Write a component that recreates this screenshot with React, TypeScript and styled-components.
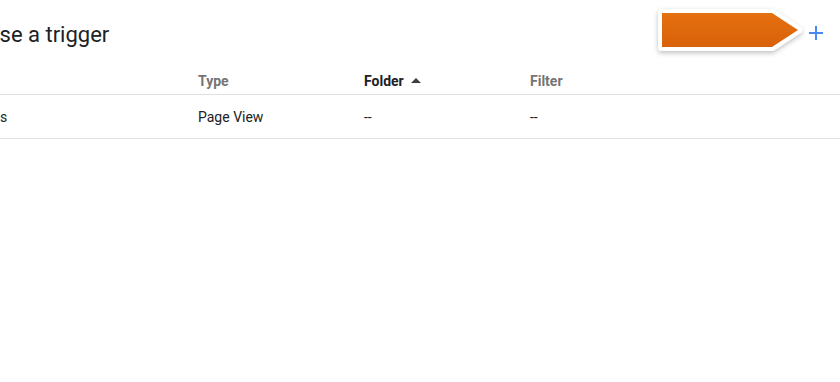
import styled, { createGlobalStyle } from "styled-components";

const GlobalStyle = createGlobalStyle`
  html, body {
    margin: 0;
    padding: 0;
    background: #ffffff;
    font-family: Roboto, "Liberation Sans", Arial, sans-serif;
    overflow: hidden;
  }
`;

const Page = styled.div`
  position: relative;
  width: 840px;
  height: 382px;
  overflow: hidden;
  background: #fff;
`;

const TitleBar = styled.div`
  display: flex;
  align-items: center;
  height: 68px;
  padding-right: 12px;
`;

const Title = styled.h1`
  flex: 1;
  margin: 0 0 0 -52px;
  padding-top: 1px;
  font-size: 22px;
  font-weight: 400;
  color: #202124;
  white-space: nowrap;
`;

const AddButton = styled.button`
  display: flex;
  align-items: center;
  justify-content: center;
  width: 24px;
  height: 24px;
  padding: 0;
  border: none;
  background: none;
  cursor: pointer;
  margin-top: -2px;
`;

const Table = styled.div`
  margin-left: -51px;
`;

const Row = styled.div<{ header?: boolean }>`
  display: grid;
  grid-template-columns: 249px 166px 166px 1fr;
  align-items: center;
  height: ${({ header }) => (header ? "26px" : "43px")};
  border-bottom: 1px solid #e0e0e0;
  font-size: 14px;
  color: #202124;
`;

const HeadCell = styled.div<{ active?: boolean }>`
  display: flex;
  align-items: center;
  gap: 7px;
  font-weight: 700;
  color: ${({ active }) => (active ? "#202124" : "#757575")};
  padding-bottom: 1px;
`;

const Cell = styled.div`
  white-space: nowrap;
`;

const SortArrow = styled.span`
  width: 0;
  height: 0;
  border-left: 5px solid transparent;
  border-right: 5px solid transparent;
  border-bottom: 5px solid #3c4043;
`;

const Callout = styled.svg`
  position: absolute;
  left: 652px;
  top: 3px;
  pointer-events: none;
`;

function PlusIcon() {
  return (
    <svg width="16" height="16" viewBox="0 0 16 16">
      <path d="M8 1v14M1 8h14" stroke="#4a8af4" strokeWidth="2" fill="none" />
    </svg>
  );
}

export default function App() {
  return (
    <Page>
      <GlobalStyle />
      <TitleBar>
        <Title>Choose a trigger</Title>
        <AddButton aria-label="Add trigger">
          <PlusIcon />
        </AddButton>
      </TitleBar>
      <Table>
        <Row header>
          <HeadCell>Name</HeadCell>
          <HeadCell>Type</HeadCell>
          <HeadCell active>
            Folder
            <SortArrow />
          </HeadCell>
          <HeadCell>Filter</HeadCell>
        </Row>
        <Row>
          <Cell>All Pages</Cell>
          <Cell>Page View</Cell>
          <Cell>--</Cell>
          <Cell>--</Cell>
        </Row>
      </Table>
      <Callout width="160" height="60" viewBox="0 0 160 60">
        <defs>
          <linearGradient id="orange" x1="0" y1="0" x2="0" y2="1">
            <stop offset="0" stopColor="#e5700f" />
            <stop offset="1" stopColor="#d8610a" />
          </linearGradient>
          <filter id="shadow" x="-10%" y="-20%" width="120%" height="150%">
            <feDropShadow dx="0" dy="2" stdDeviation="2.5" floodColor="#000" floodOpacity="0.25" />
          </filter>
        </defs>
        <polygon
          points="10,10 120,10 146,27 120,44 10,44"
          fill="#fff"
          stroke="#fff"
          strokeWidth="8"
          strokeLinejoin="round"
          filter="url(#shadow)"
        />
        <polygon points="10,10 120,10 146,27 120,44 10,44" fill="url(#orange)" />
      </Callout>
    </Page>
  );
}
